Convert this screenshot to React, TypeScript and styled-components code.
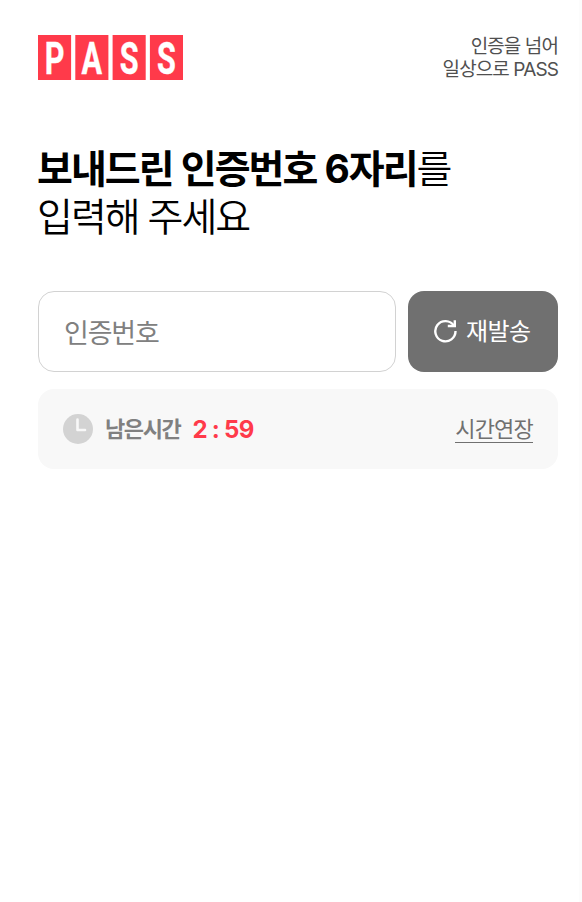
import React from "react";
import styled, { createGlobalStyle } from "styled-components";

const GlobalStyle = createGlobalStyle`
  * { box-sizing: border-box; }
  body { margin: 0; background: #fff; color: #000; }
  body, input, button { font-family: Inter, "Noto Sans CJK KR", sans-serif; }
`;

const Page = styled.div`
  min-height: 902px;
  padding: 35px 21px 0 38px;
  border-right: 3px solid #fcfcfc;
`;

const Header = styled.header`
  display: flex;
  justify-content: space-between;
  height: 45px;
`;

const Logo = styled.svg`
  display: block;
  width: 145px;
  height: 45px;
  overflow: visible;
`;

const Slogan = styled.p`
  margin: 0;
  text-align: right;
  font-size: 19px;
  line-height: 23px;
  letter-spacing: -0.9px;
  white-space: nowrap;
  color: #505050;
`;

const Title = styled.h1`
  margin: 65px 0 0 -1px;
  font-size: 39px;
  line-height: 48px;
  font-weight: 350;
  letter-spacing: -2px;
  white-space: nowrap;
`;

const Strong = styled.strong`
  font-weight: 700;
  word-spacing: 1px;
`;

const Digit = styled.span`
  letter-spacing: -1px;
`;

const CodeRow = styled.div`
  display: flex;
  gap: 12px;
  height: 81px;
  margin-top: 50px;
`;

const CodeInput = styled.input`
  flex: 1;
  min-width: 0;
  padding: 3px 25px 0;
  border: 1px solid #d2d2d2;
  border-radius: 16px;
  outline: none;
  background: #fff;
  font-size: 27px;
  letter-spacing: -1.2px;
  &::placeholder { color: #808080; opacity: 1; }
`;

const ResendButton = styled.button`
  display: flex;
  align-items: center;
  gap: 9px;
  width: 150px;
  padding: 0 0 2px 25px;
  border: 0;
  border-radius: 16px;
  background: #707070;
  color: #fff;
  font-size: 24px;
  letter-spacing: -0.6px;
`;

const ResendLabel = styled.span`
  margin-left: -1px;
  padding-bottom: 2px;
`;

const TimerPanel = styled.div`
  display: flex;
  align-items: center;
  height: 80px;
  margin-top: 17px;
  padding: 0 25px;
  border-radius: 16px;
  background: #f8f8f8;
`;

const TimerLabel = styled.span`
  margin-left: 12px;
  padding-bottom: 4px;
  font-size: 22px;
  font-weight: 700;
  letter-spacing: -1.4px;
  color: #808080;
`;

const TimerValue = styled.span`
  margin-left: 12px;
  font-size: 24px;
  font-weight: 650;
  letter-spacing: -0.4px;
  word-spacing: -0.7px;
  color: #ff3a4a;
`;

const ExtendLink = styled.button`
  height: 28px;
  margin-left: auto;
  padding: 0;
  border: 0;
  border-bottom: 1px solid #707070;
  background: none;
  font-size: 22px;
  line-height: 29px;
  letter-spacing: -0.8px;
  color: #707070;
`;

const logoTiles = [
  { letter: "P", x: 0 },
  { letter: "A", x: 37.3 },
  { letter: "S", x: 74.6 },
  { letter: "S", x: 111.9 },
];

const PassLogo = () => (
  <Logo viewBox="0 0 145 45" role="img" aria-label="PASS">
    {logoTiles.map(({ letter, x }) => (
      <g key={x}>
        <rect x={x} width="33.1" height="45" fill="#ff3a4a" />
        <text
          transform={`translate(${x + 16.5} 38.6) scale(0.68 1)`}
          textAnchor="middle"
          fontFamily="Roboto, sans-serif"
          fontWeight="700"
          fontSize="45"
          fill="#fff"
          stroke="#fff"
          strokeWidth="0.4"
        >
          {letter}
        </text>
      </g>
    ))}
  </Logo>
);

const RefreshIcon = () => (
  <svg width="25" height="24" viewBox="0 0 25 24" fill="none" stroke="#fff" strokeWidth="2.4">
    <path d="M20.9 6.8A10.1 10.1 0 1 0 22.5 12" />
    <path d="M21.8 1.2V7H14.8" />
  </svg>
);

const ClockIcon = () => (
  <svg width="30" height="30" viewBox="0 0 30 30" fill="none">
    <circle cx="15" cy="15" r="15" fill="#d3d3d3" />
    <path d="M14.5 5.5V16H22" stroke="#f8f8f8" strokeWidth="2.6" strokeLinecap="round" strokeLinejoin="round" />
  </svg>
);

export default function App() {
  return (
    <>
      <GlobalStyle />
      <Page>
        <Header>
          <PassLogo />
          <Slogan>인증을 넘어<br />일상으로 PASS</Slogan>
        </Header>
        <main>
          <Title>
            <Strong>보내드린 인증번호 <Digit>6</Digit>자리</Strong>를<br />입력해 주세요
          </Title>
          <CodeRow>
            <CodeInput placeholder="인증번호" inputMode="numeric" maxLength={6} />
            <ResendButton type="button"><RefreshIcon /><ResendLabel>재발송</ResendLabel></ResendButton>
          </CodeRow>
          <TimerPanel>
            <ClockIcon />
            <TimerLabel>남은시간</TimerLabel>
            <TimerValue>2 : 59</TimerValue>
            <ExtendLink type="button">시간연장</ExtendLink>
          </TimerPanel>
        </main>
      </Page>
    </>
  );
}
